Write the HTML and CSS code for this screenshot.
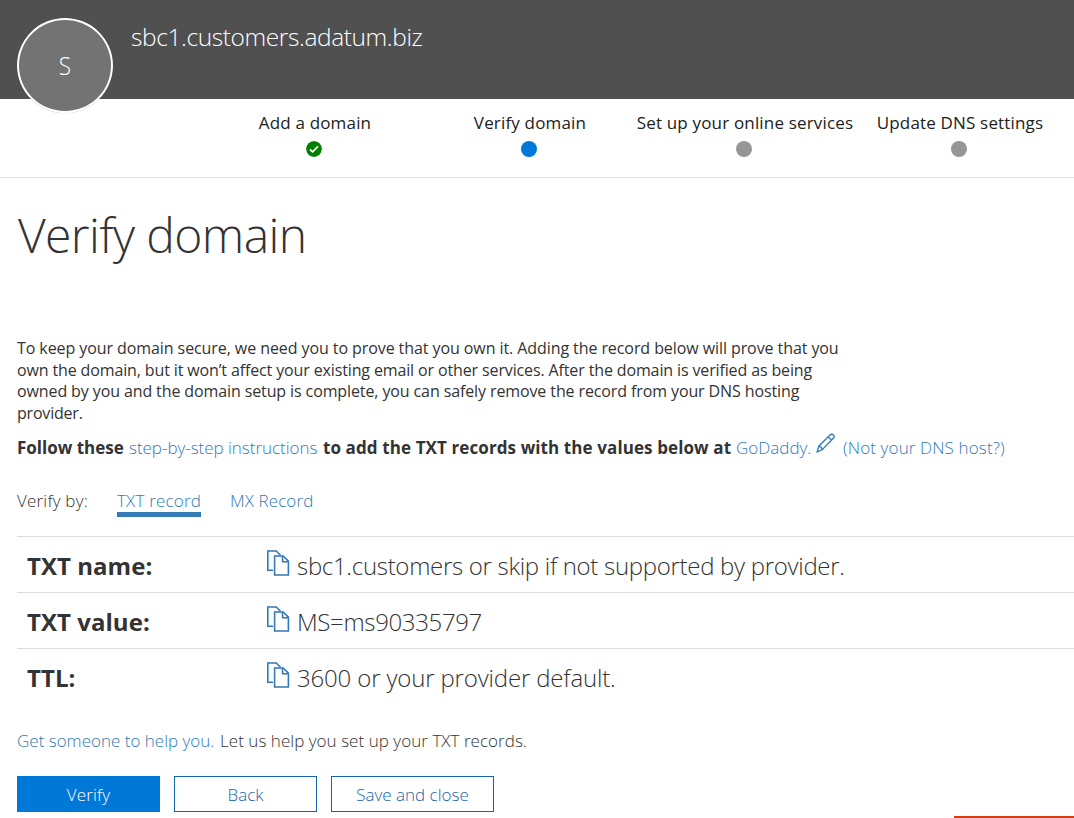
FILE: index.html
```html
<!DOCTYPE html>
<html lang="en">
<head>
<meta charset="utf-8">
<title>Verify domain</title>
<link rel="stylesheet" href="styles.css">
</head>
<body>
<svg class="defs" aria-hidden="true">
  <symbol id="copy" viewBox="0 0 24 26">
    <path d="M7 20.3H1.8V1h8.4l4.3 4.3" />
    <path d="M8.6 6h8.6l5.2 5.2V25H8.6z" />
    <path d="M16.6 6v5.7h5.8" />
  </symbol>
</svg>
<header class="top">
  <div class="avatar"><span>S</span></div>
  <div class="domain">sbc1.customers.adatum.biz</div>
</header>
<nav class="steps">
  <div class="step"><span>Add a domain</span><svg class="dot done" viewBox="0 0 16 16"><circle cx="8" cy="8" r="8"/><path d="M4 8.3l2.6 2.6 5.4-5.6"/></svg></div>
  <div class="step"><span>Verify domain</span><i class="dot current"></i></div>
  <div class="step"><span>Set up your online services</span><i class="dot"></i></div>
  <div class="step"><span>Update DNS settings</span><i class="dot"></i></div>
</nav>
<main class="content">
  <h1>Verify domain</h1>
  <p class="intro"><span class="l1">To keep your domain secure, we need you to prove that you own it. Adding the record below will prove that you</span><br><span class="l2">own the domain, but it won’t affect your existing email or other services. After the domain is verified as being</span><br><span class="l3">owned by you and the domain setup is complete, you can safely remove the record from your DNS hosting</span><br><span class="l4">provider.</span></p>
  <div class="follow"><b class="first">Follow these</b><a class="guide">step-by-step instructions</a><b class="rest">to add the TXT records with the values below at</b><a class="host">GoDaddy.</a><svg class="pencil" viewBox="0 0 20 20"><path d="M1.2 18.8l1.6-5.6L14 2c1-1 2.5-1 3.4-.1s.9 2.4-.1 3.4L6.2 16.8zM12.2 3.8l3.7 3.7M2.8 13.2c1.8.2 3.2 1.7 3.4 3.6"/></svg><a class="other">(Not your DNS host?)</a></div>
  <div class="tabs"><span>Verify by:</span><a class="tab active">TXT record</a><a class="tab mx">MX Record</a></div>
  <div class="records">
    <div class="row"><b>TXT name:</b><svg class="copy"><use href="#copy"/></svg><span class="v1">sbc1.customers or skip if not supported by provider.</span></div>
    <div class="row"><b>TXT value:</b><svg class="copy"><use href="#copy"/></svg><span class="v2">MS=ms90335797</span></div>
    <div class="row"><b>TTL:</b><svg class="copy"><use href="#copy"/></svg><span class="v3">3600 or your provider default.</span></div>
  </div>
  <p class="help"><a>Get someone to help you.</a><span>Let us help you set up your TXT records.</span></p>
  <div class="actions"><button class="btn primary">Verify</button><button class="btn">Back</button><button class="btn wide">Save and close</button></div>
</main>
<div class="feedback"></div>
</body>
</html>
```
FILE: styles.css
```css
* { box-sizing: border-box; }
body {
  margin: 0;
  height: 818px;
  overflow: hidden;
  position: relative;
  background: #fff;
  color: #333;
  font: 300 17px/24px "Open Sans", "Noto Sans", sans-serif;
  white-space: nowrap;
}
p, h1 { margin: 0; }
.defs { position: absolute; width: 0; height: 0; }
a { color: #337ab7; }
.top {
  display: flex;
  align-items: flex-start;
  height: 99px;
  padding: 18px 17px 0;
  background: #505050;
  color: #fff;
}
.avatar {
  flex: none;
  width: 96px;
  height: 95px;
  margin-right: 18px;
  border: 2px solid #fff;
  border-radius: 50%;
  background: #737373;
  box-shadow: 0 0 1px rgba(0,0,0,.35);
  text-align: center;
  font-size: 25px;
  line-height: 91px;
}
.avatar span { display: inline-block; transform: scaleX(.9); }
.domain { padding-top: 1px; font-size: 24.5px; line-height: 36px; letter-spacing: -.4px; }
.steps {
  display: grid;
  grid-template-columns: repeat(4, 215px);
  height: 79px;
  padding: 12px 0 0 207px;
  border-bottom: 1px solid #e1e1e1;
  color: #212121;
  font-weight: 400;
  letter-spacing: .17px;
}
.step { display: flex; flex-direction: column; align-items: center; }
.step span { padding-left: 1px; }
.dot { width: 16px; height: 16px; margin: 6px 1px 0 0; border-radius: 50%; background: #969696; }
.current { background: #0078d7; }
.done { background: none; fill: #008000; }
.done path { fill: none; stroke: #fff; stroke-width: 1.7; }
.content { padding: 27px 0 0 17px; }
h1 { padding-left: 1px; font-size: 48px; font-weight: 300; line-height: 60px; letter-spacing: -.6px; }
.intro { height: 86px; margin-top: 73px; font-size: 16px; font-weight: 400; line-height: 21.5px; }
.l1 { letter-spacing: -.08px; }
.l2 { letter-spacing: -.13px; }
.l3 { letter-spacing: -.11px; }
.l4 { letter-spacing: -.2px; }
.follow { display: flex; margin-top: 12px; }
.follow b { font-weight: 700; }
.first { width: 112px; }
.guide { width: 194px; letter-spacing: -.03px; }
.rest { width: 413px; letter-spacing: .1px; }
.host { width: 80px; }
.pencil { width: 20px; height: 20px; margin: -3px 7px 0 0; fill: none; stroke: #337ab7; stroke-width: 1.3; }
.other { letter-spacing: .13px; }
.tabs { display: flex; height: 30px; margin-top: 29px; letter-spacing: .2px; }
.tabs span { width: 100px; }
.tab { height: 28px; }
.active { width: 84px; margin-right: 29px; border-bottom: 5px solid #337ab7; }
.mx { letter-spacing: .1px; }
.records { margin-top: 17px; }
.row {
  display: flex;
  align-items: center;
  height: 56px;
  padding: 2px 0 0 10px;
  border-top: 1px solid #ddd;
  font-size: 24px;
  line-height: 32px;
}
.row b { width: 239px; font-weight: 700; letter-spacing: .05px; }
.copy { width: 24px; height: 26px; margin: -5px 7px 0 0; fill: none; stroke: #337ab7; stroke-width: 1.6; }
.v1 { letter-spacing: -.3px; }
.v2 { letter-spacing: -.35px; }
.v3 { letter-spacing: -.16px; }
.help { display: flex; margin-top: 25px; }
.help a { width: 203px; }
.help span { letter-spacing: .04px; }
.actions { display: flex; gap: 14px; margin-top: 23px; }
.btn {
  width: 143px;
  height: 36px;
  padding: 2px 0 0;
  border: 1px solid #1864ab;
  background: #fff;
  color: #1864ab;
  font: inherit;
  line-height: 32px;
}
.primary { border-color: #0078d7; background: #0078d7; color: #fff; letter-spacing: .2px; }
.wide { width: 163px; }
.feedback { position: absolute; right: 0; bottom: 0; width: 120px; height: 2px; background: #d83b10; }
```
